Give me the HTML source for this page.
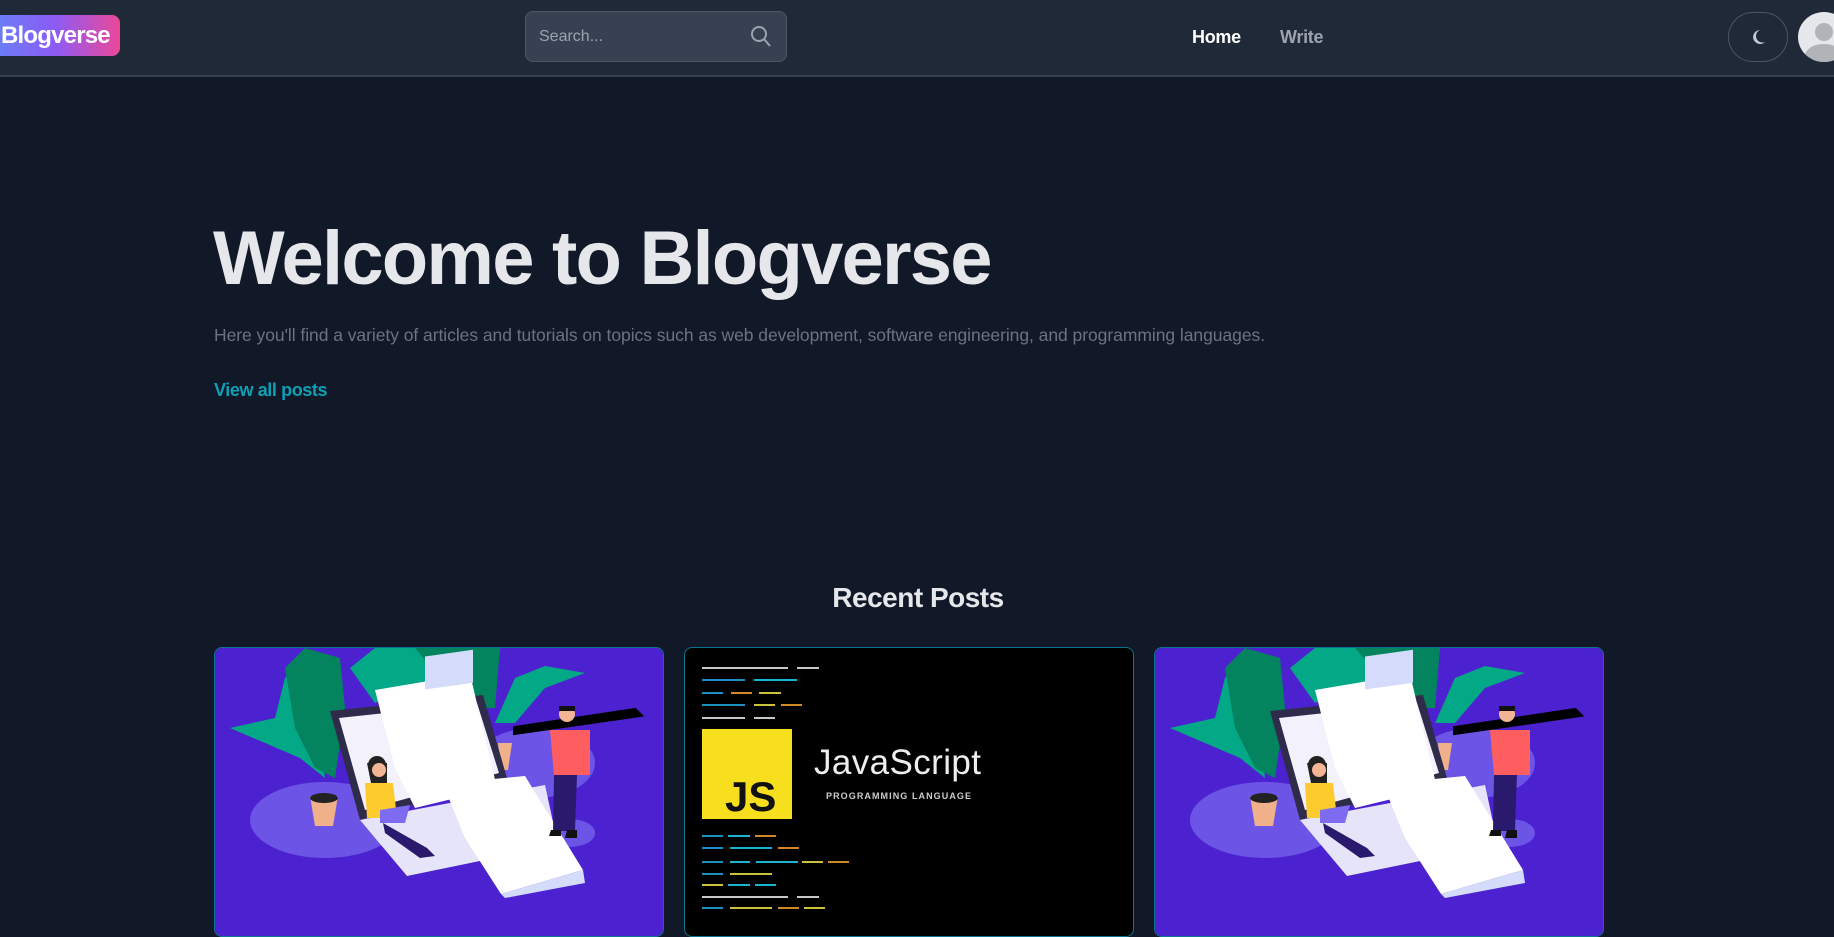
<!DOCTYPE html>
<html><head><meta charset="utf-8"><style>
*{box-sizing:border-box;margin:0;padding:0}
html,body{width:1834px;height:917px;overflow:hidden;background:#111827;font-family:"Liberation Sans",sans-serif}
.nav{position:absolute;left:0;top:0;width:1834px;height:77px;background:#1f2937;border-bottom:2px solid #374151}
.logo{position:absolute;left:0;top:15px;width:120px;height:41px;border-radius:0 8px 8px 0;background:linear-gradient(90deg,#6d7cf7,#8b5cf6 45%,#ec4899);color:#fff;font-weight:bold;font-size:24px;line-height:41px;padding-left:1px;letter-spacing:-0.8px}
.search{position:absolute;left:525px;top:11px;width:262px;height:51px;background:#374151;border:1px solid #4b5563;border-radius:8px}
.search span{position:absolute;left:13px;top:16px;color:#9ca3af;font-size:16px}
.search svg{position:absolute;right:14px;top:13px}
.nl{position:absolute;top:27px;font-size:18px;font-weight:bold;letter-spacing:-0.3px}
.moon{position:absolute;left:1728px;top:12px;width:60px;height:50px;border:1px solid #4b5563;border-radius:30px}
.av{position:absolute;left:1798px;top:12px;width:52px;height:50px;border-radius:50%;background:#e5e7eb;overflow:hidden}
h1{position:absolute;left:213px;top:214px;font-size:76px;color:#e5e7eb;font-weight:bold;letter-spacing:-1.8px;line-height:90px;white-space:nowrap}
.p{position:absolute;left:214px;top:325px;font-size:17.5px;color:#6b7280;white-space:nowrap;letter-spacing:-0.05px}
.va{position:absolute;left:214px;top:380px;font-size:18px;color:#0e9fb5;font-weight:bold;letter-spacing:-0.4px}
.rp{position:absolute;left:0;width:1836px;text-align:center;top:582px;font-size:28px;color:#e5e7eb;font-weight:bold;letter-spacing:-0.5px}
.card{position:absolute;top:647px;width:450px;height:290px;border:1px solid #0e7490;border-radius:8px;overflow:hidden}
</style></head><body>
<div class="nav">
<div class="logo">Blogverse</div>
<div class="search"><span>Search...</span><svg width="22" height="24" viewBox="0 0 22 24"><circle cx="9" cy="9" r="7" fill="none" stroke="#9ca3af" stroke-width="2"/><path d="M14 14l6 7" stroke="#9ca3af" stroke-width="2"/></svg></div>
<div class="nl" style="left:1192px;color:#fff">Home</div>
<div class="nl" style="left:1280px;color:#9ca3af">Write</div>
<div class="moon"><svg style="position:absolute;left:22px;top:15px" width="16" height="18" viewBox="0 0 16 18"><path d="M9 2A7 7 0 1 0 14 14A6 6 0 0 1 9 2Z" fill="#c5c9d1"/></svg></div>
<div class="av"><svg width="52" height="50" viewBox="0 0 52 50"><circle cx="26" cy="20" r="9" fill="#b0b3b8"/><path d="M5 50C6 36 16 32 26 32S46 36 47 50Z" fill="#b0b3b8"/></svg></div>
</div>
<h1>Welcome to Blogverse</h1>
<div class="p">Here you'll find a variety of articles and tutorials on topics such as web development, software engineering, and programming languages.</div>
<div class="va">View all posts</div>
<div class="rp">Recent Posts</div>

<div class="card" style="left:214px"><svg width="450" height="290" viewBox="0 0 450 290"><g id="ill">
<rect width="450" height="290" fill="#4c22d0"/>
<ellipse cx="110" cy="172" rx="75" ry="38" fill="#6c55e6"/>
<ellipse cx="320" cy="115" rx="60" ry="35" fill="#6c55e6"/>
<ellipse cx="355" cy="185" rx="25" ry="14" fill="#6c55e6"/>
<path d="M15 80L60 70 70 30 95 5 120 40 105 90 110 130 85 110Z" fill="#03a987"/>
<path d="M70 20L90 0 125 10 130 60 120 130 100 120 80 80Z" fill="#03845f"/>
<path d="M135 20L160 0 220 0 240 30 200 40 160 55Z" fill="#03a987"/>
<path d="M200 0H285L280 60 250 60Z" fill="#03845f"/>
<path d="M280 75L300 30 330 18 370 25 330 40 300 75Z" fill="#03a987"/>
<path d="M95 148H123L118 178H100Z" fill="#f0b08a"/><ellipse cx="109" cy="150" rx="14" ry="5" fill="#222"/>
<path d="M283 95H297L293 122H286Z" fill="#f0b08a"/>
<path d="M115 63L268 47 292 130 145 172Z" fill="#2f2b4a"/>
<path d="M124 70L262 55 284 125 150 162Z" fill="#f2f1fc"/>
<path d="M145 172L330 137 343 197 192 228Z" fill="#e6e4f8"/>
<path d="M160 42L255 26 282 140 200 160 180 120Z" fill="#fff"/>
<rect x="210" y="38" width="48" height="33" fill="#d5dcfb" transform="skewY(-8)"/>
<path d="M228 136L310 128 368 222 286 246 250 190Z" fill="#fff"/>
<path d="M286 246L368 222 370 235 290 250Z" fill="#d5dcfb"/>
<path d="M150 135L178 135 182 170 152 170Z" fill="#fecb2e"/>
<circle cx="162" cy="117" r="9" fill="#222"/><path d="M152 115H172V135H156Z" fill="#222"/><circle cx="164" cy="122" r="7" fill="#f4b595"/>
<path d="M165 162L195 157 190 175 165 175Z" fill="#7d6cf0"/>
<path d="M168 175L212 200 220 208 205 210 170 185Z" fill="#2a1a6e"/>
<path d="M300 80L420 62 425 67 300 85Z" fill="#000" stroke="#000" stroke-width="4"/>
<circle cx="352" cy="66" r="8" fill="#f4b595"/><path d="M344 58H360V63H344Z" fill="#111"/>
<path d="M335 82L375 82 375 127 339 127Z" fill="#fe5e60"/>
<path d="M339 127H362L360 183H338Z" fill="#2a1a6e"/>
<path d="M336 182H346V188H334ZM352 182H362V190H350Z" fill="#111"/>
</g></svg></div>

<div class="card" style="left:684px;background:#000"><svg width="450" height="290" viewBox="0 0 450 290"><g stroke-width="2">
<g stroke="#c8c8c8"><path d="M17 20H103M112 20H134M17 70H60M69 70H90M17 249H103M112 249H134"/></g>
<g stroke="#1a8fc0"><path d="M17 32H60M17 45H38M17 57H60M17 188H38M17 200H38M17 214H38M17 226H38M17 260H38"/></g>
<g stroke="#1ab3d0"><path d="M69 32H112M43 188H65M45 200H87M45 214H65M71 214H113M43 237H65M70 237H91"/></g>
<g stroke="#d0882a"><path d="M46 45H67M96 57H117M70 188H91M93 200H114M143 214H164M93 260H114"/></g>
<g stroke="#c9c23a"><path d="M74 45H96M69 57H90M117 214H138M45 226H87M17 237H38M45 260H87M119 260H140"/></g>
</g>
<rect x="17" y="81" width="90" height="90" fill="#f7df1e"/>
<text x="40" y="163" font-family="Liberation Sans,sans-serif" font-weight="bold" font-size="42" fill="#111">JS</text>
<text x="129" y="126" font-family="Liberation Sans,sans-serif" font-size="35" fill="#eee" textLength="167">JavaScript</text>
<text x="141" y="151" font-family="Liberation Sans,sans-serif" font-weight="bold" font-size="9" fill="#ccc" textLength="145">PROGRAMMING LANGUAGE</text>
</svg></div>

<div class="card" style="left:1154px"><svg width="450" height="290" viewBox="0 0 450 290"><use href="#ill"/></svg></div>
</body></html>
